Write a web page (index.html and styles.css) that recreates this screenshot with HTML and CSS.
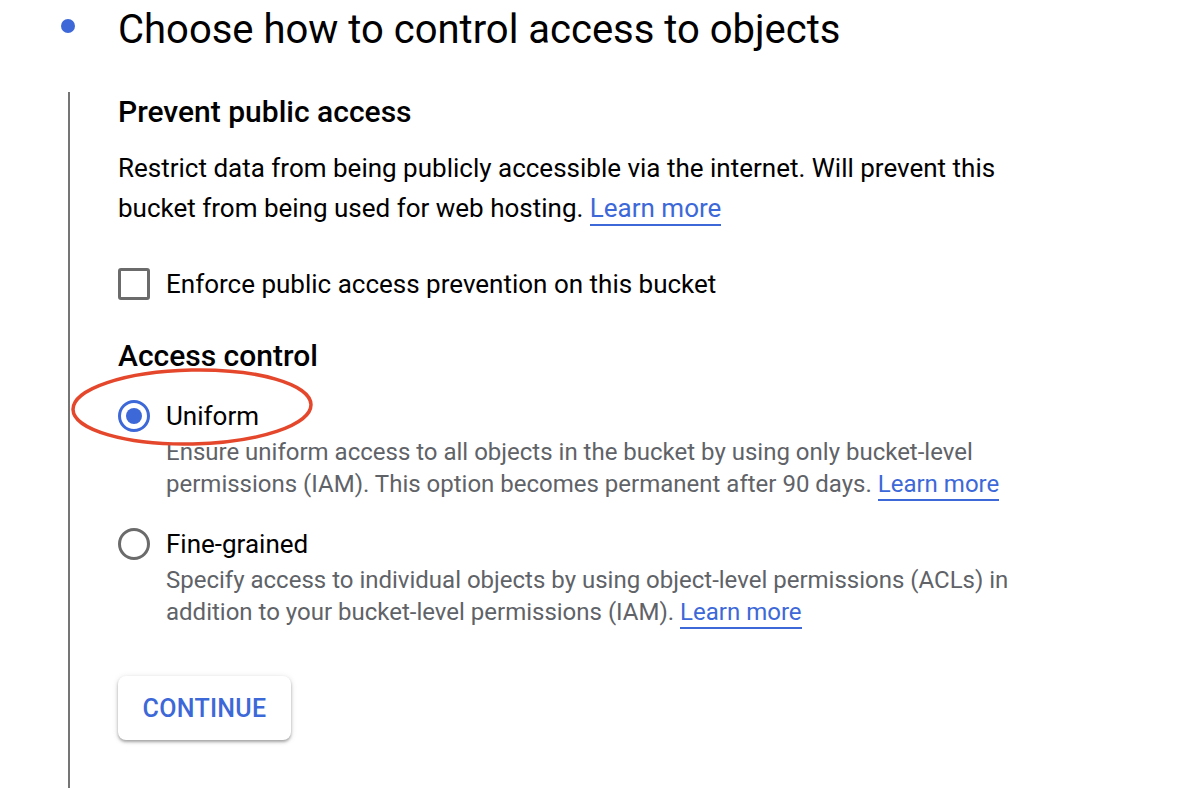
FILE: index.html
```html
<!DOCTYPE html>
<html>
<head>
<meta charset="utf-8">
<link rel="stylesheet" href="styles.css">
</head>
<body>
<div class="step">
  <div class="step-header">
    <span class="step-dot"></span>
    <h1 class="step-title">Choose how to control access to objects</h1>
  </div>
  <div class="step-body">
    <h2 class="section-title">Prevent public access</h2>
    <p class="body-text">Restrict data from being publicly accessible via the internet. Will prevent this bucket from being used for web hosting. <a class="link" href="#">Learn more</a></p>
    <label class="check-row"><span class="checkbox"></span><span>Enforce public access prevention on this bucket</span></label>
    <h2 class="section-title access-title">Access control</h2>
    <div class="option option-first">
      <div class="option-row">
        <span class="radio radio-on"></span>
        <span class="option-label">Uniform</span>
        <svg class="highlight" width="248" height="84" viewBox="0 0 248 84"><ellipse cx="124" cy="42" rx="119" ry="37" fill="none" stroke="#e4472b" stroke-width="3.5" transform="rotate(-1.2 124 42)"/></svg>
      </div>
      <p class="option-desc">Ensure uniform access to all objects in the bucket by using only bucket-level permissions (IAM). This option becomes permanent after 90 days. <a class="link" href="#">Learn more</a></p>
    </div>
    <div class="option option-second">
      <div class="option-row">
        <span class="radio"></span>
        <span class="option-label">Fine-grained</span>
      </div>
      <p class="option-desc">Specify access to individual objects by using object-level permissions (ACLs) in addition to your bucket-level permissions (IAM). <a class="link" href="#">Learn more</a></p>
    </div>
    <button class="btn">CONTINUE</button>
  </div>
</div>
</body>
</html>
```
FILE: styles.css
```css
* { box-sizing: border-box; }
html, body { margin: 0; padding: 0; background: #fff; }
body {
  font-family: Roboto, "Liberation Sans", Arial, sans-serif;
  color: #202124;
  width: 1184px;
  height: 802px;
  overflow: hidden;
}
.step-header {
  display: flex;
  align-items: center;
  height: 60px;
}
.step-dot {
  width: 14px;
  height: 14px;
  border-radius: 50%;
  background: #3d68d8;
  margin-left: 61px;
  margin-top: -8px;
}
.step-title {
  margin: 0 0 0 43px;
  font-size: 40px;
  font-weight: 400;
  line-height: 60px;
  color: #000;
}
.step-body {
  margin-left: 68px;
  margin-top: 32px;
  border-left: 2px solid #757575;
  padding-left: 48px;
  padding-bottom: 48px;
}
.section-title {
  margin: 0;
  font-size: 30px;
  font-weight: 500;
  line-height: 40px;
  color: #000;
}
.body-text {
  margin: 16px 0 0;
  font-size: 26px;
  line-height: 40px;
  color: #000;
  max-width: 940px;
}
.link {
  color: #3d68d8;
  text-decoration: none;
  border-bottom: 2px solid #3d68d8;
  padding-bottom: 1px;
}
.check-row {
  display: flex;
  align-items: center;
  gap: 16px;
  margin-top: 36px;
  height: 40px;
  font-size: 26px;
  color: #000;
}
.checkbox {
  width: 32px;
  height: 32px;
  border: 3px solid #6b6b6b;
  border-radius: 3px;
  flex: none;
}
.access-title { margin-top: 32px; }
.option-first { margin-top: 20px; }
.option-second { margin-top: 24px; }
.option-row {
  position: relative;
  display: flex;
  align-items: center;
  gap: 16px;
  height: 40px;
}
.radio {
  width: 32px;
  height: 32px;
  border-radius: 50%;
  border: 3px solid #6b6b6b;
  flex: none;
  display: flex;
  align-items: center;
  justify-content: center;
}
.radio-on { border-color: #3d68d8; }
.radio-on::after {
  content: "";
  width: 16px;
  height: 16px;
  border-radius: 50%;
  background: #3d68d8;
}
.option-label {
  font-size: 26px;
  color: #000;
}
.highlight {
  position: absolute;
  left: -50px;
  top: -31px;
  pointer-events: none;
}
.option-desc {
  margin: 0 0 0 48px;
  font-size: 24px;
  line-height: 32px;
  color: #5f6368;
  max-width: 880px;
}
.btn {
  display: block;
  margin-top: 48px;
  height: 64px;
  width: 173px;
  border: none;
  border-radius: 8px;
  background: #fff;
  box-shadow: 0 2px 3px rgba(0,0,0,0.3), 0 1px 6px rgba(0,0,0,0.12);
  font-family: Roboto, "Liberation Sans", Arial, sans-serif;
  font-size: 25px;
  font-weight: 500;
  color: #3d68d8;
  letter-spacing: 0.3px;
}
```
